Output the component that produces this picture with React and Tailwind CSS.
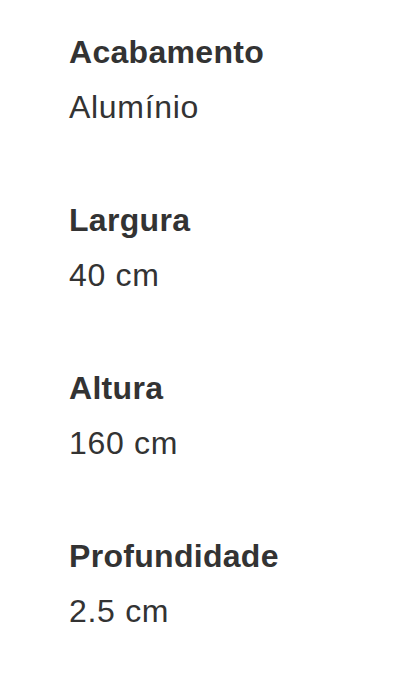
const SPECS = [
  { label: 'Acabamento', value: 'Alumínio' },
  { label: 'Largura', value: '40 cm' },
  { label: 'Altura', value: '160 cm' },
  { label: 'Profundidade', value: '2.5 cm' },
]

export default function App() {
  return (
    <div className="min-h-[699px] bg-white px-[69px] pt-[34px] text-[#333333]" style={{ fontFamily: '"Liberation Sans", Arial, sans-serif' }}>
      <dl className="flex flex-col gap-[77px]">
        {SPECS.map((s) => (
          <div key={s.label} className="flex flex-col gap-[19px]">
            <dt className="text-[32px] leading-[36px] font-bold tracking-[0.3px]">{s.label}</dt>
            <dd className="text-[32px] leading-[36px] tracking-[0.7px]">{s.value}</dd>
          </div>
        ))}
      </dl>
    </div>
  )
}
